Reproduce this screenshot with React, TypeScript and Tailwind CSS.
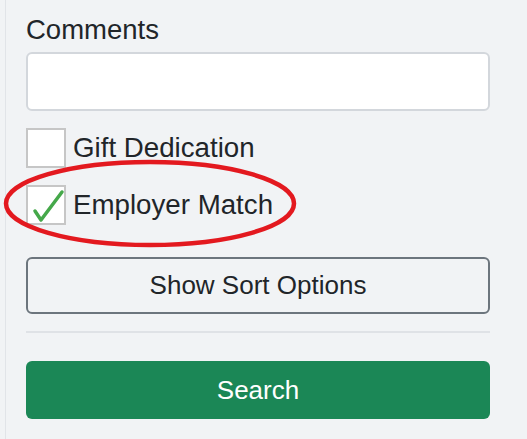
export default function App() {
  return (
    <div className="relative min-h-[439px] bg-[#f1f3f5] font-['Liberation_Sans',Arial,sans-serif] text-[#212529]">
      <div className="ml-[5px] border-l border-[#e1e4e8] pl-5 pr-[37px] pt-[10px] pb-5">
        <label className="block text-[27.5px] leading-[40px]">Comments</label>
        <textarea className="mt-[2px] block h-[59px] w-full resize-none rounded-[6px] border-2 border-[#d3d7dc] bg-white" />

        <div className="mt-[17px] flex items-center">
          <span className="block h-10 w-10 shrink-0 border-2 border-[#c6c6c6] bg-white" />
          <span className="ml-[7px] text-[27.7px] leading-[40px]">Gift Dedication</span>
        </div>
        <div className="mt-[17px] flex items-center">
          <span className="relative block h-10 w-10 shrink-0 border-2 border-[#c6c6c6] bg-white">
            <svg className="absolute -left-[2px] -top-[2px]" width="40" height="40" viewBox="0 0 40 40">
              <path d="M9 26 L15 35 L36 7" fill="none" stroke="#45a84a" strokeWidth="3.5" strokeLinecap="round" strokeLinejoin="round" />
            </svg>
          </span>
          <span className="ml-[7px] text-[27.7px] leading-[40px]">Employer Match</span>
        </div>

        <button className="mt-8 flex h-[57px] w-full items-center justify-center rounded-[6px] border-2 border-[#6c757d] text-[26px]">
          Show Sort Options
        </button>
        <hr className="mt-[17px] border-t-2 border-[#dfe2e6]" />
        <button className="mt-[28px] flex h-[58px] w-full items-center justify-center rounded-[6px] bg-[#1b8756] text-[26px] text-white">
          Search
        </button>
      </div>

      <svg className="pointer-events-none absolute left-0 top-0" width="527" height="439">
        <ellipse cx="150" cy="203.5" rx="144" ry="41.5" fill="none" stroke="#e3191f" strokeWidth="4.5" />
      </svg>
    </div>
  )
}
